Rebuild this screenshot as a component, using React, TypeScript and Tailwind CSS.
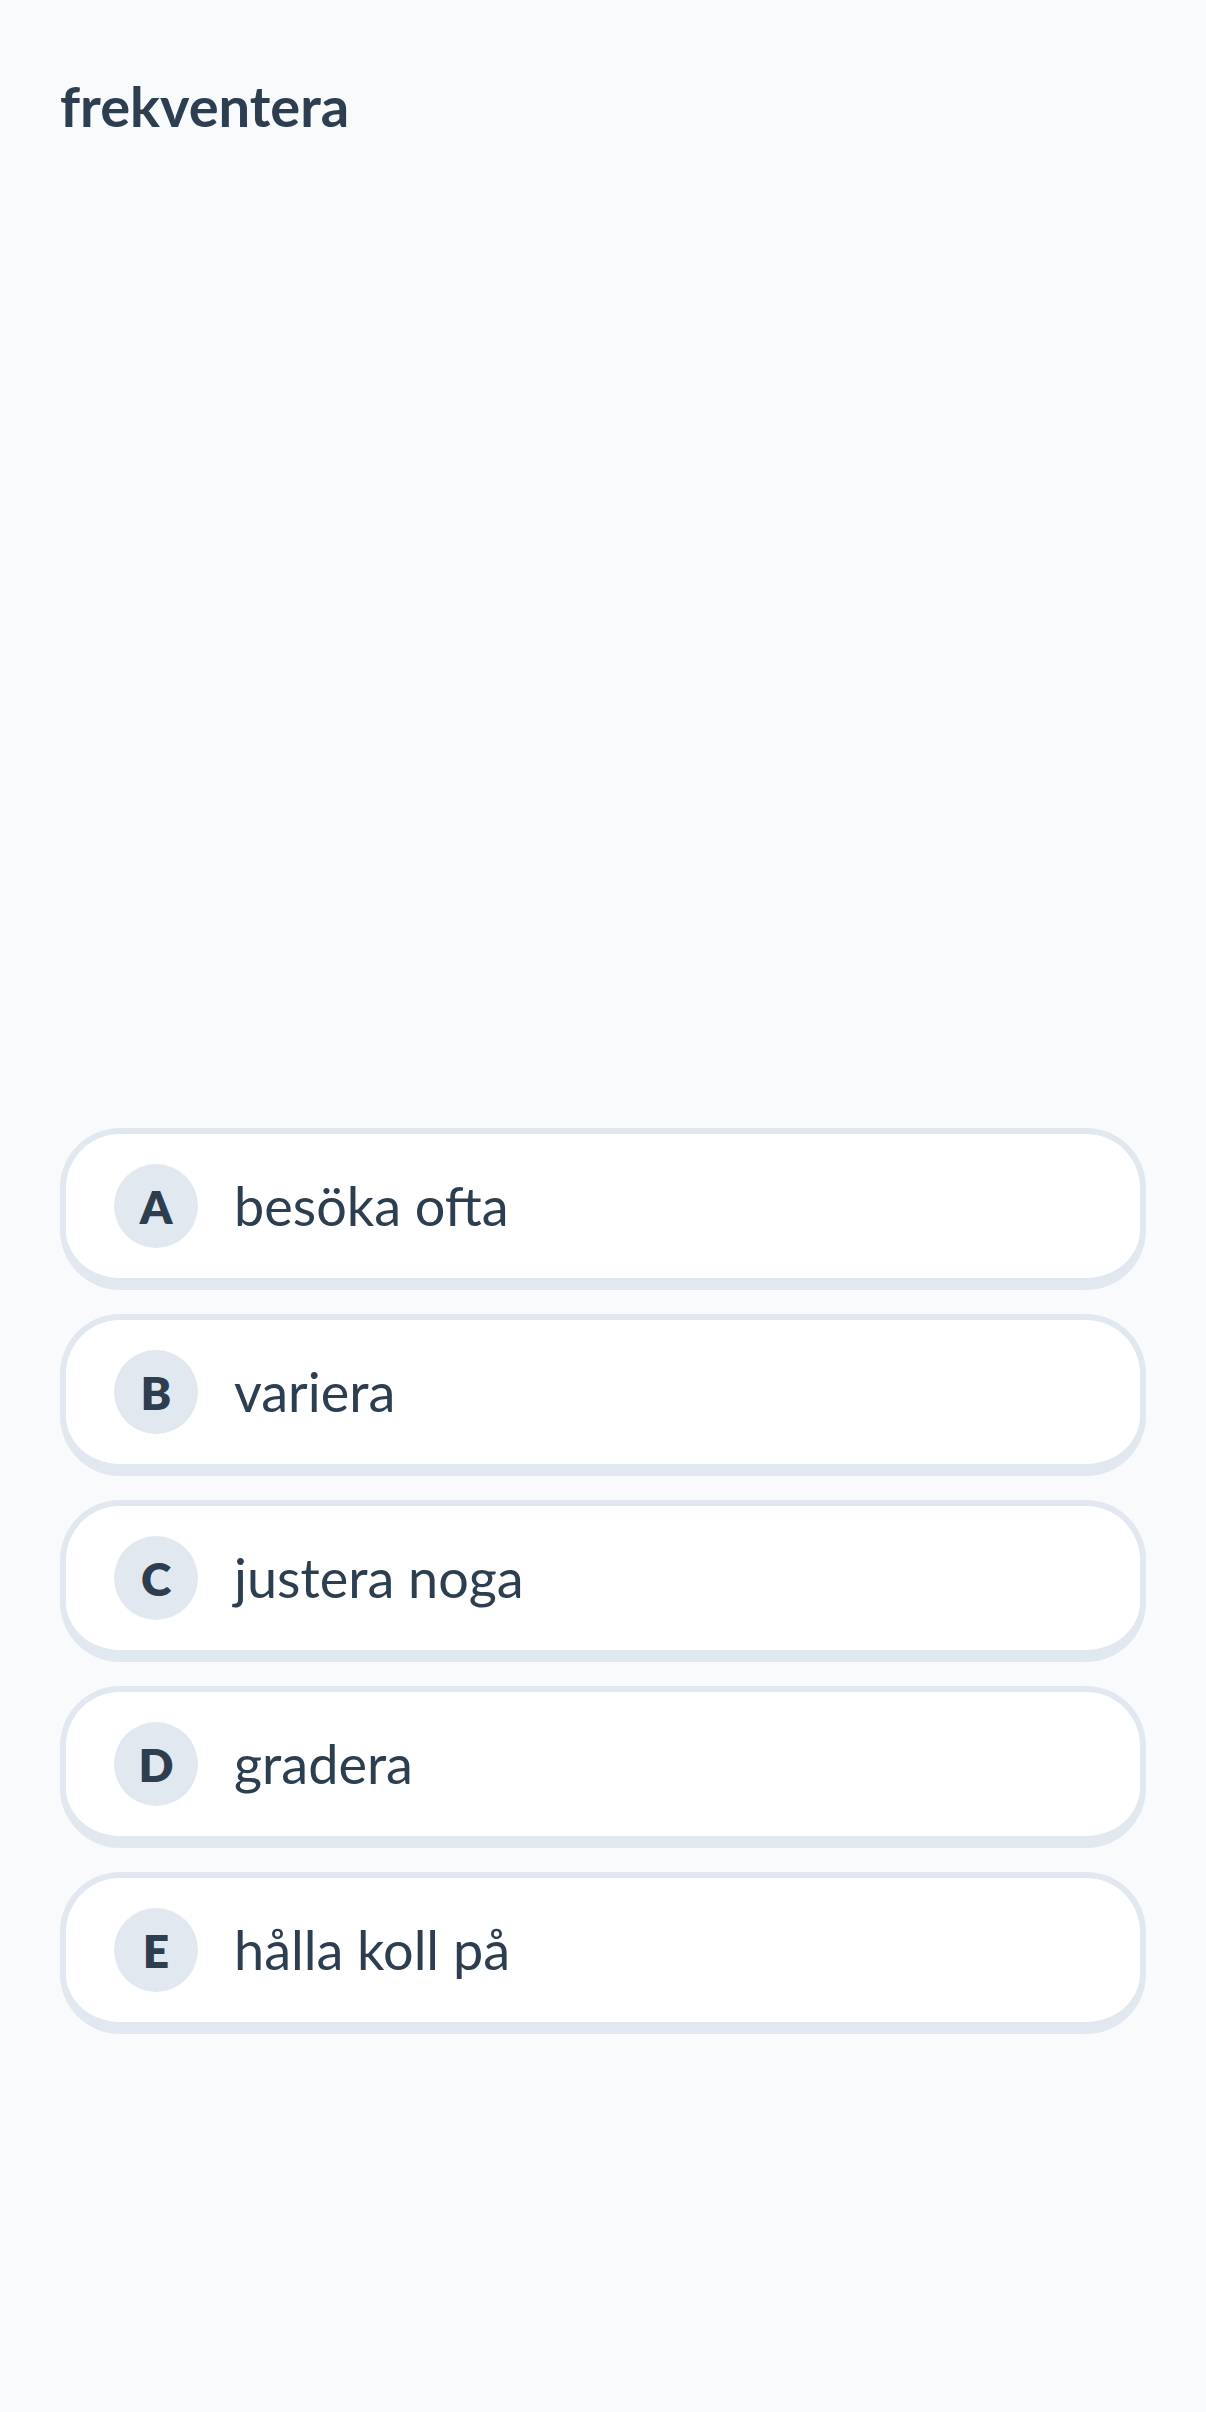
const options = [
  { letter: "A", text: "besöka ofta" },
  { letter: "B", text: "variera" },
  { letter: "C", text: "justera noga" },
  { letter: "D", text: "gradera" },
  { letter: "E", text: "hålla koll på" },
];

export default function App() {
  return (
    <div
      className="min-h-[2412px] bg-[#f8fafc] px-[60px] text-[#2c3e50]"
      style={{ fontFamily: "Lato, 'Noto Sans', sans-serif" }}
    >
      <h1 className="pt-[70px] text-[56px] font-bold leading-[72px]">frekventera</h1>

      <div className="mt-[986px] flex flex-col gap-[24px]">
        {options.map((o) => (
          <button
            key={o.letter}
            className="flex h-[162px] w-full items-center rounded-[60px] border-[6px] border-b-[12px] border-[#e2e8f0] bg-white pl-[48px] text-left"
          >
            <span className="flex h-[84px] w-[84px] shrink-0 items-center justify-center rounded-full bg-[#e2e8f0] text-[46px] font-extrabold">
              {o.letter}
            </span>
            <span className="ml-[36px] text-[54px] leading-none">{o.text}</span>
          </button>
        ))}
      </div>
    </div>
  );
}
